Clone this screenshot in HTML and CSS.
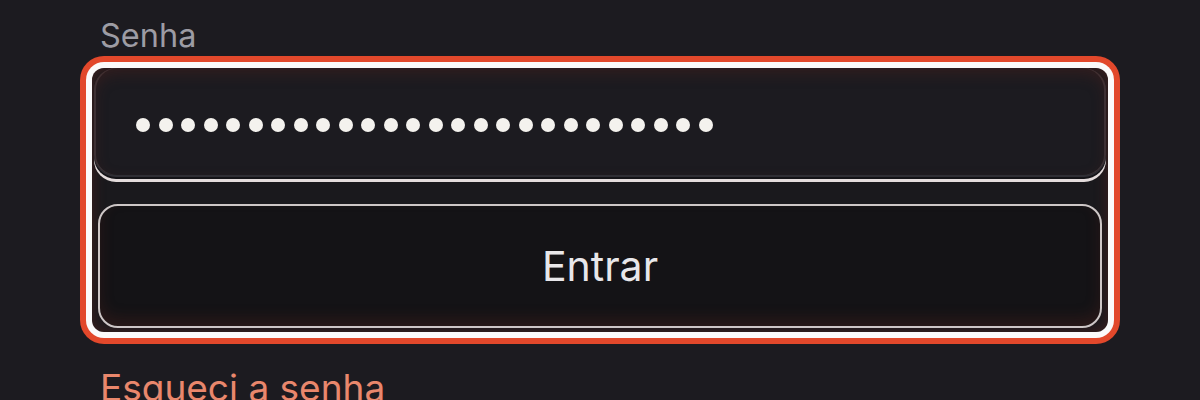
FILE: index.html
```html
<!DOCTYPE html>
<html lang="pt">
<head>
<meta charset="utf-8">
<link rel="stylesheet" href="styles.css">
</head>
<body>
<main class="form">
  <label class="label">Senha</label>
  <div class="group">
    <div class="input">
      <span class="dot"></span><span class="dot"></span><span class="dot"></span><span class="dot"></span><span class="dot"></span><span class="dot"></span><span class="dot"></span><span class="dot"></span><span class="dot"></span><span class="dot"></span><span class="dot"></span><span class="dot"></span><span class="dot"></span><span class="dot"></span><span class="dot"></span><span class="dot"></span><span class="dot"></span><span class="dot"></span><span class="dot"></span><span class="dot"></span><span class="dot"></span><span class="dot"></span><span class="dot"></span><span class="dot"></span><span class="dot"></span><span class="dot"></span>
    </div>
    <button class="btn">Entrar</button>
  </div>
  <a class="forgot">Esqueci a senha</a>
</main>
</body>
</html>
```
FILE: styles.css
```css
html, body {
  margin: 0;
  padding: 0;
  background: #1c1b20;
  height: 400px;
  overflow: hidden;
}
body {
  font-family: Inter, "Noto Sans", sans-serif;
}
.form {
  display: flex;
  flex-direction: column;
  padding-top: 18px;
}
.label {
  display: block;
  margin-left: 100px;
  font-size: 32.5px;
  line-height: 36px;
  color: #9d9ca4;
}
.group {
  margin: 14px 0 0 92px;
  width: 1016px;
  height: 264px;
  box-sizing: border-box;
  border-radius: 12px;
  background: #1a191d;
  box-shadow: 0 0 0 6px #fbfafa, 0 0 0 12px #e2482b, inset 0 0 14px rgba(110, 40, 30, 0.45);
  display: flex;
  flex-direction: column;
}
.input {
  margin: 0 2px;
  height: 109px;
  box-sizing: border-box;
  border-radius: 22px;
  background: #1c1b20;
  border-bottom: 2px solid #2f2e34;
  box-shadow: inset 0 6px 14px rgba(90, 35, 30, 0.35), inset 2px 0 0 rgba(220, 200, 200, 0.15), inset -2px 0 0 rgba(220, 200, 200, 0.15), 0 2px 0 #141317, 0 5px 0 #e4dcdc;
  display: flex;
  align-items: center;
  gap: 8.5px;
  padding: 6px 0 0 42px;
}
.dot {
  width: 14px;
  height: 14px;
  border-radius: 50%;
  background: #f4f2ee;
  flex: none;
}
.btn {
  margin: 27px 6px 0 6px;
  height: 124px;
  box-sizing: border-box;
  border: 2px solid #cdc6c6;
  border-radius: 20px;
  background: #141316;
  box-shadow: inset 0 -8px 14px rgba(90, 35, 30, 0.3);
  color: #e8e7ea;
  font-family: Inter, "Noto Sans", sans-serif;
  font-size: 41px;
  padding: 0;
}
.forgot {
  margin: 34px 0 0 100px;
  font-size: 37px;
  line-height: 44px;
  color: #e9876c;
}
```
